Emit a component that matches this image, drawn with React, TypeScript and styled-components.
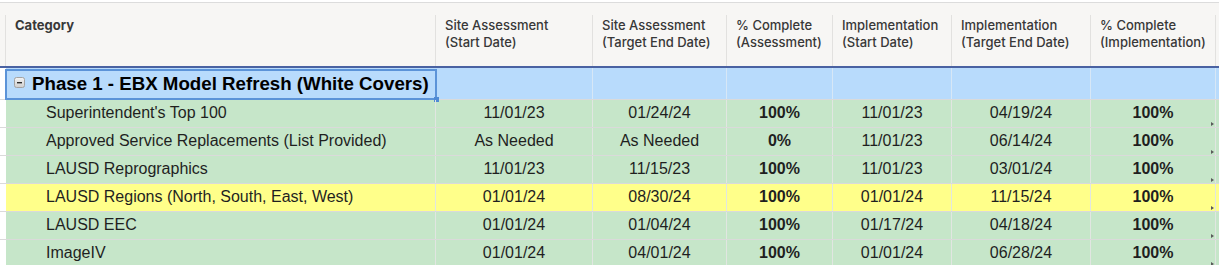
import * as React from "react"
import styled, { createGlobalStyle, css } from "styled-components"

const GlobalStyle = createGlobalStyle`
	html, body {
		margin: 0;
		padding: 0;
		background: #ffffff;
	}
`

const COLS = "6px 430px 157px 134px 106px 119px 139px 125px 1fr"

const Sheet = styled.div`
	padding-top: 2px;
	width: 1219px;
	height: 265px;
	overflow: hidden;
	box-sizing: border-box;
	font-family: "Liberation Sans", Arial, sans-serif;
`

const HeaderRow = styled.div`
	display: grid;
	grid-template-columns: ${COLS};
	height: 66px;
	padding-top: 12px;
	box-sizing: border-box;
	background: #f7f6f4;
	border-top: 1px solid #dcdcdc;
	border-bottom: 2px solid #4a62a2;
`

const HeaderCell = styled.div<{ $strong?: boolean; $plain?: boolean }>`
	padding: 2px 10px 0 9px;
	border-right: 1px solid ${(p) => (p.$plain ? "transparent" : "#e2e1df")};
	font-family: Inter, "Noto Sans", sans-serif;
	font-size: 13px;
	line-height: 16.5px;
	font-weight: ${(p) => (p.$strong ? 700 : 500)};
	color: #383838;
	white-space: nowrap;
`

const Row = styled.div<{ $tone: "phase" | "green" | "yellow" }>`
	display: grid;
	grid-template-columns: ${COLS};
	height: ${(p) => (p.$tone === "phase" ? "32px" : "28px")};
	box-sizing: border-box;
	border-bottom: 1px solid #dadada;
	background: ${(p) =>
		p.$tone === "phase" ? "#b8dbfc" : p.$tone === "yellow" ? "#ffff8a" : "#c6e6c9"};
`

const Gutter = styled.div`
	background: #ffffff;
`

const Cell = styled.div<{ $bold?: boolean; $mark?: boolean }>`
	position: relative;
	border-right: 1px solid #e1e6e1;
	text-align: center;
	font-size: 16px;
	line-height: 24px;
	padding: 1px 0 2px;
	color: #1f1f1f;
	font-weight: ${(p) => (p.$bold ? 700 : 400)};
	white-space: nowrap;
	${(p) =>
		p.$mark &&
		css`
			&::after {
				content: "";
				position: absolute;
				right: 1px;
				bottom: 1px;
				border-left: 3px solid #5a5a5a;
				border-top: 2.5px solid transparent;
				border-bottom: 2.5px solid transparent;
			}
		`}
`

const NameCell = styled(Cell)`
	text-align: left;
	padding-left: 40px;
`

const PhaseCell = styled.div`
	position: relative;
	display: flex;
	align-items: center;
	gap: 7px;
	padding-left: 8px;
	font-size: 18.7px;
	line-height: 30px;
	font-weight: 700;
	color: #000000;
	white-space: nowrap;
	&::before {
		content: "";
		position: absolute;
		top: 1px;
		left: -1px;
		right: -1px;
		bottom: -1px;
		border: 2px solid #5b93d8;
		pointer-events: none;
	}
	&::after {
		content: "";
		position: absolute;
		right: -3px;
		bottom: -3px;
		width: 5px;
		height: 5px;
		background: #4f8ad4;
	}
`

const PhaseBlank = styled.div`
	border-right: 1px solid #d7e7f6;
`

const Toggle = () => (
	<svg width="11" height="11" viewBox="0 0 11 11" style={{ flexShrink: 0, marginTop: -2 }}>
		<defs>
			<linearGradient id="tg" x1="0" y1="0" x2="0" y2="1">
				<stop offset="0" stopColor="#f4f4f4" />
				<stop offset="1" stopColor="#cfcfcf" />
			</linearGradient>
		</defs>
		<rect x="0.5" y="0.5" width="10" height="10" rx="2" fill="url(#tg)" stroke="#a3a3a3" />
		<rect x="3" y="5" width="5" height="1.4" fill="#2b2b2b" />
	</svg>
)

type Item = {
	name: string
	saStart: string
	saEnd: string
	saPct: string
	imStart: string
	imEnd: string
	imPct: string
	highlight?: boolean
}

const items: Item[] = [
	{ name: "Superintendent's Top 100", saStart: "11/01/23", saEnd: "01/24/24", saPct: "100%", imStart: "11/01/23", imEnd: "04/19/24", imPct: "100%" },
	{ name: "Approved Service Replacements (List Provided)", saStart: "As Needed", saEnd: "As Needed", saPct: "0%", imStart: "11/01/23", imEnd: "06/14/24", imPct: "100%" },
	{ name: "LAUSD Reprographics", saStart: "11/01/23", saEnd: "11/15/23", saPct: "100%", imStart: "11/01/23", imEnd: "03/01/24", imPct: "100%" },
	{ name: "LAUSD Regions (North, South, East, West)", saStart: "01/01/24", saEnd: "08/30/24", saPct: "100%", imStart: "01/01/24", imEnd: "11/15/24", imPct: "100%", highlight: true },
	{ name: "LAUSD EEC", saStart: "01/01/24", saEnd: "01/04/24", saPct: "100%", imStart: "01/17/24", imEnd: "04/18/24", imPct: "100%" },
	{ name: "ImageIV", saStart: "01/01/24", saEnd: "04/01/24", saPct: "100%", imStart: "01/01/24", imEnd: "06/28/24", imPct: "100%" },
]

const headers: [string, string][] = [
	["Site Assessment", "(Start Date)"],
	["Site Assessment", "(Target End Date)"],
	["% Complete", "(Assessment)"],
	["Implementation", "(Start Date)"],
	["Implementation", "(Target End Date)"],
	["% Complete", "(Implementation)"],
]

export default function App() {
	return (
		<>
			<GlobalStyle />
			<Sheet>
				<HeaderRow>
					<HeaderCell style={{ padding: 0 }} />
					<HeaderCell $strong>Category</HeaderCell>
					{headers.map(([a, b], i) => (
						<HeaderCell key={i}>
							{a}
							<br />
							{b}
						</HeaderCell>
					))}
					<HeaderCell $plain />
				</HeaderRow>

				<Row $tone="phase">
					<Gutter />
					<PhaseCell>
						<Toggle />
						<span>Phase 1 - EBX Model Refresh (White Covers)</span>
					</PhaseCell>
					<PhaseBlank />
					<PhaseBlank />
					<PhaseBlank />
					<PhaseBlank />
					<PhaseBlank />
					<PhaseBlank />
					<div />
				</Row>

				{items.map((it) => (
					<Row key={it.name} $tone={it.highlight ? "yellow" : "green"}>
						<Gutter />
						<NameCell>{it.name}</NameCell>
						<Cell>{it.saStart}</Cell>
						<Cell>{it.saEnd}</Cell>
						<Cell $bold>{it.saPct}</Cell>
						<Cell>{it.imStart}</Cell>
						<Cell>{it.imEnd}</Cell>
						<Cell $bold $mark>
							{it.imPct}
						</Cell>
						<div />
					</Row>
				))}
			</Sheet>
		</>
	)
}
